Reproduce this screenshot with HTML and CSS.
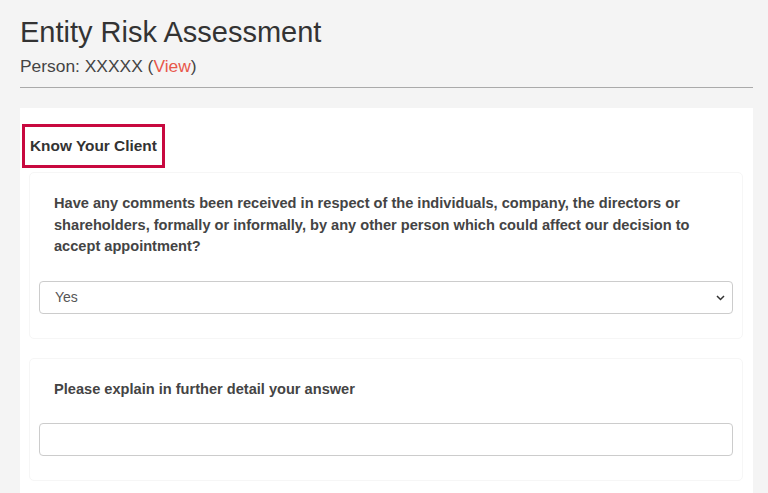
FILE: index.html
```html
<!DOCTYPE html>
<html lang="en">
<head>
    <meta charset="UTF-8">
    <meta name="viewport" content="width=device-width, initial-scale=1.0">
    <title>Entity Risk Assessment</title>
    <link rel="stylesheet" href="styles.css">
</head>
<body>

<div class="page">
    <h1 class="title">Entity Risk Assessment</h1>
    <p class="subtitle">Person: XXXXX (<a href="#" class="view-link">View</a>)</p>
    <hr class="divider">

    <div class="card">
        <h3 class="section-title">Know Your Client</h3>

        <div class="question">
            <label class="question-label" for="q-comments">Have any comments been received in respect of the individuals, company, the directors or shareholders, formally or informally, by any other person which could affect our decision to accept appointment?</label>
            <div class="select-wrap">
                <select id="q-comments" class="field">
                    <option>Yes</option>
                    <option>No</option>
                </select>
                <svg class="chevron" width="9" height="6" viewBox="0 0 9 6"><path d="M1 1l3.5 3.5 3.5-3.5" fill="none" stroke="#333" stroke-width="1.5"/></svg>
            </div>
        </div>

        <div class="question">
            <label class="question-label" for="q-detail">Please explain in further detail your answer</label>
            <input type="text" id="q-detail" class="field">
        </div>
    </div>
</div>

</body>
</html>
```

FILE: styles.css
```css
body {
    font-family: "Liberation Sans", Arial, sans-serif;
    margin: 0;
    background-color: #f4f4f4;
    color: #333;
}
.page {
    padding: 12px 15px 0 20px;
}
.title {
    font-size: 29px;
    font-weight: normal;
    margin: 0;
    line-height: 40px;
}
.subtitle {
    font-size: 17.4px;
    margin: 4px 0 0;
    color: #444;
}
.view-link {
    color: #e8574a;
    text-decoration: none;
}
.divider {
    border: 0;
    border-top: 1px solid #aaa;
    margin: 10px 0 20px;
}
.card {
    background: #fff;
    padding: 16px 10px 14px 2px;
    min-height: 400px;
}
.section-title {
    display: inline-block;
    margin: 0 0 4px;
    padding: 10px 5px 10px 5px;
    border: 3px solid #c8093f;
    font-size: 15.4px;
    color: #333;
}
.question {
    margin: 0 0 19px 7px;
    padding: 20px 9px 24px 9px;
    border: 1px solid #f6f6f6;
    border-radius: 5px;
}
.question-label {
    display: block;
    font-size: 14.6px;
    font-weight: bold;
    line-height: 21.5px;
    color: #444;
    padding: 0 15px 0 15px;
    margin-bottom: 23px;
}
.select-wrap {
    position: relative;
}
.field {
    display: block;
    box-sizing: border-box;
    width: 100%;
    height: 33px;
    border: 1px solid #ccc;
    border-radius: 4px;
    background: #fff;
    font-family: inherit;
    font-size: 14px;
    color: #555;
    padding: 0 15px;
    appearance: none;
}
.chevron {
    position: absolute;
    right: 8px;
    top: 14px;
}
```
